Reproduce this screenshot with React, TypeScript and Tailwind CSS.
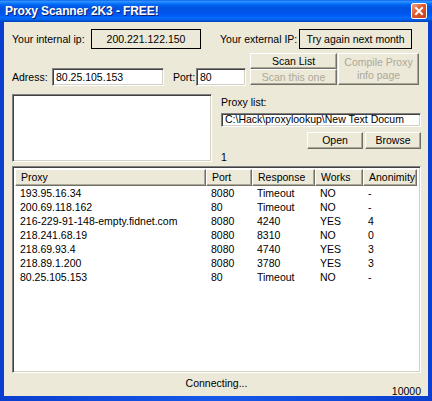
const rows: string[][] = [
  ["193.95.16.34", "8080", "Timeout", "NO", "-"],
  ["200.69.118.162", "80", "Timeout", "NO", "-"],
  ["216-229-91-148-empty.fidnet.com", "8080", "4240", "YES", "4"],
  ["218.241.68.19", "8080", "8310", "NO", "0"],
  ["218.69.93.4", "8080", "4740", "YES", "3"],
  ["218.89.1.200", "8080", "3780", "YES", "3"],
  ["80.25.105.153", "80", "Timeout", "NO", "-"],
];

const cols = [
  { name: "Proxy", w: "w-[191px]" },
  { name: "Port", w: "w-[46px]" },
  { name: "Response", w: "w-[63px]" },
  { name: "Works", w: "w-[48px]" },
  { name: "Anonimity", w: "w-[54px]" },
];

const sunken =
  "border border-t-[#808080] border-l-[#808080] border-b-white border-r-white shadow-[inset_1px_1px_0_#404040,inset_-1px_-1px_0_#d4d0c8]";
const raised =
  "border border-t-white border-l-white border-b-[#716f64] border-r-[#716f64] shadow-[inset_-1px_-1px_0_#aca899]";

export default function App() {
  return (
    <div
      className="w-[432px] h-[401px] flex flex-col bg-[#0842d4] text-black text-[10.5px] leading-none overflow-hidden"
      style={{ fontFamily: '"Liberation Sans", Arial, sans-serif' }}
    >
      {/* title bar */}
      <div className="h-[22px] shrink-0 flex items-center pl-[5px] pr-[5px] bg-[linear-gradient(#0058ee_0%,#3593ff_5%,#288eff_9%,#127dff_14%,#036ffc_18%,#0262ee_24%,#0057e5_32%,#0054e3_40%,#0055eb_60%,#005bf5_70%,#026afe_80%,#0062ef_88%,#0052d6_94%,#0040ab_100%)]">
        <span className="text-white font-bold text-[12px] tracking-[-0.1px] [text-shadow:1px_1px_0_#0a1e6e]">
          Proxy Scanner 2K3 - FREE!
        </span>
        <div className="ml-auto w-[16px] h-[16px] rounded-[2px] border border-white bg-[linear-gradient(135deg,#f2a48a_0%,#e2582c_45%,#c5401a_100%)] flex items-center justify-center">
          <svg width="10" height="10" viewBox="0 0 10 10">
            <path d="M2 2 L8 8 M8 2 L2 8" stroke="white" strokeWidth="2" strokeLinecap="square" />
          </svg>
        </div>
      </div>
      {/* body with frame */}
      <div className="flex-1 flex px-[4px] pb-[5px] bg-[linear-gradient(90deg,#0a3fcf,#1659ea_50%,#0a3fcf)]">
        <div className="flex-1 bg-[#ece9d8] flex flex-col pl-[8px] pr-[7px]">
          {/* row 1 */}
          <div className="flex items-center h-[20px] mt-[7px]">
            <span className="w-[79px]">Your internal ip:</span>
            <div className="w-[110px] h-[20px] border border-black flex items-center justify-center">
              200.221.122.150
            </div>
            <span className="ml-[19px] w-[79px]">Your external IP:</span>
            <div className="w-[113px] h-[20px] border border-black flex items-center justify-center">
              Try again next month
            </div>
          </div>
          {/* row 2 */}
          <div className="flex items-start mt-[4px] h-[33px]">
            <div className="flex items-center mt-[15px] h-[18px]">
              <span className="w-[40px]">Adress:</span>
              <div className={`w-[112px] h-[18px] bg-white flex items-center pl-[3px] ${sunken}`}>80.25.105.153</div>
              <span className="ml-[9px] w-[23px]">Port:</span>
              <div className={`w-[50px] h-[18px] bg-white flex items-center pl-[3px] ${sunken}`}>80</div>
            </div>
            <div className="ml-[4px] flex flex-col">
              <div className={`w-[87px] h-[16px] flex items-center justify-center ${raised}`}>Scan List</div>
              <div className={`w-[87px] h-[16px] flex items-center justify-center text-[#aca899] ${raised}`}>
                Scan this one
              </div>
            </div>
            <div
              className={`ml-[1px] w-[81px] h-[32px] flex flex-col items-center justify-center text-center text-[#aca899] leading-[13px] ${raised}`}
            >
              <span>Compile Proxy</span>
              <span>info page</span>
            </div>
          </div>
          {/* row 3 */}
          <div className="flex mt-[8px] h-[68px]">
            <div className={`w-[200px] h-[68px] bg-white ${sunken}`}></div>
            <div className="ml-[9px] flex flex-col w-[200px]">
              <span className="mt-[3px]">Proxy list:</span>
              <div className={`mt-[5px] h-[19px] bg-white flex items-center pl-[3px] overflow-hidden whitespace-nowrap ${sunken}`}>
                C:\Hack\proxylookup\New Text Docum
              </div>
              <div className="flex justify-end mt-[5px] gap-[2px]">
                <div className={`w-[56px] h-[17px] flex items-center justify-center ${raised}`}>Open</div>
                <div className={`w-[56px] h-[17px] flex items-center justify-center ${raised}`}>Browse</div>
              </div>
              <span className="mt-[3px]">1</span>
            </div>
          </div>
          {/* list */}
          <div className={`mt-[4px] h-[207px] w-[409px] bg-white p-[2px] flex flex-col ${sunken}`}>
            <div className="flex h-[17px] shrink-0">
              {cols.map((c) => (
                <div key={c.name} className={`${c.w} h-[17px] flex items-center pl-[5px] bg-[#ece9d8] ${raised}`}>
                  {c.name}
                </div>
              ))}
            </div>
            {rows.map((r, i) => (
              <div key={i} className="flex h-[14px] items-center">
                {r.map((v, j) => (
                  <div key={j} className={`${cols[j].w} pl-[5px] whitespace-nowrap`}>
                    {v}
                  </div>
                ))}
              </div>
            ))}
          </div>
          {/* status */}
          <div className="relative flex-1">
            <div className="absolute left-0 right-0 top-[5px] text-center">Connecting...</div>
            <div className="absolute right-[0px] top-[13px]">10000</div>
          </div>
        </div>
      </div>
    </div>
  );
}
